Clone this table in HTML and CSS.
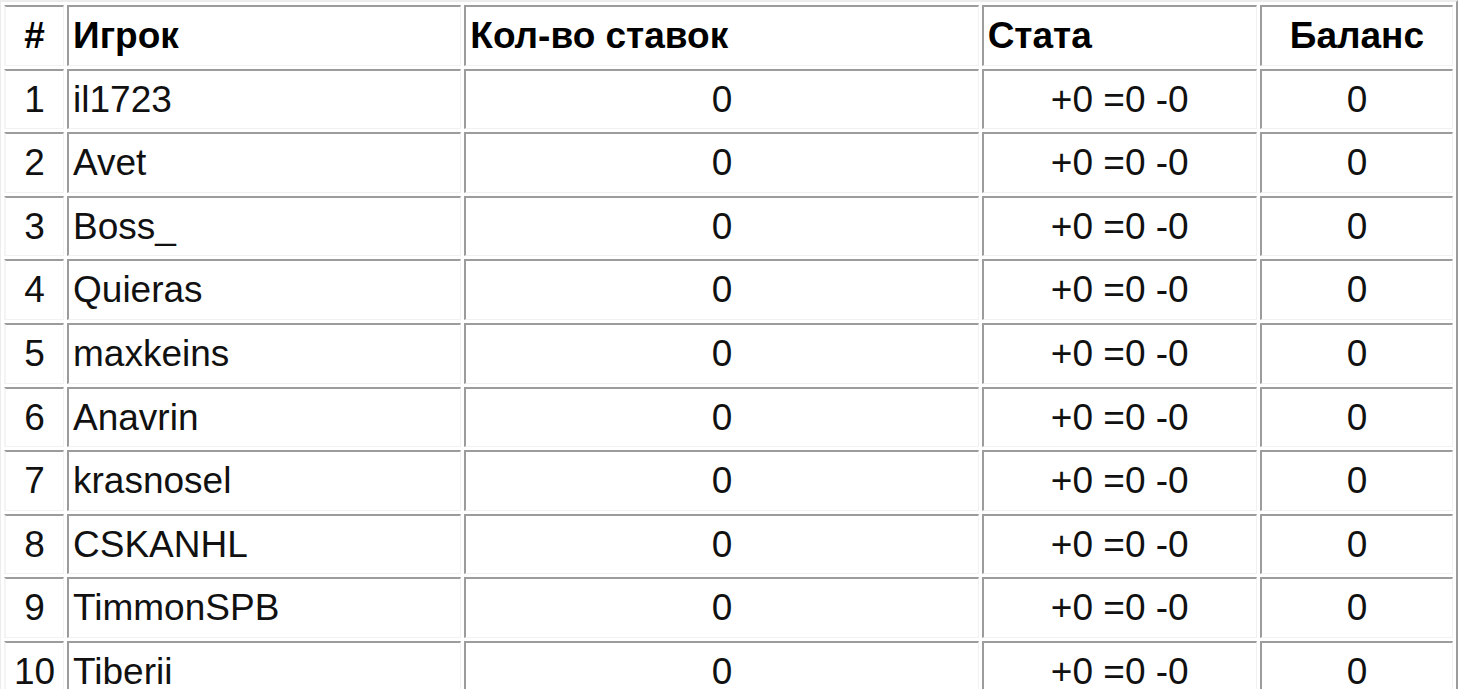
FILE: index.html
```html
<!DOCTYPE html>
<html lang="ru">
<head>
<meta charset="utf-8">
<title>Игроки</title>
<link rel="stylesheet" href="styles.css">
</head>
<body>
<table class="players">
  <colgroup>
    <col class="c-num">
    <col class="c-name">
    <col class="c-bets">
    <col class="c-stat">
    <col class="c-bal">
  </colgroup>
  <thead>
    <tr>
      <th class="center">#</th>
      <th class="left">Игрок</th>
      <th class="left">Кол-во ставок</th>
      <th class="left">Стата</th>
      <th class="center">Баланс</th>
    </tr>
  </thead>
  <tbody>
    <tr><td class="center">1</td><td class="left">il1723</td><td class="center">0</td><td class="center">+0 =0 -0</td><td class="center">0</td></tr>
    <tr><td class="center">2</td><td class="left">Avet</td><td class="center">0</td><td class="center">+0 =0 -0</td><td class="center">0</td></tr>
    <tr><td class="center">3</td><td class="left">Boss_</td><td class="center">0</td><td class="center">+0 =0 -0</td><td class="center">0</td></tr>
    <tr><td class="center">4</td><td class="left">Quieras</td><td class="center">0</td><td class="center">+0 =0 -0</td><td class="center">0</td></tr>
    <tr><td class="center">5</td><td class="left">maxkeins</td><td class="center">0</td><td class="center">+0 =0 -0</td><td class="center">0</td></tr>
    <tr><td class="center">6</td><td class="left">Anavrin</td><td class="center">0</td><td class="center">+0 =0 -0</td><td class="center">0</td></tr>
    <tr><td class="center">7</td><td class="left">krasnosel</td><td class="center">0</td><td class="center">+0 =0 -0</td><td class="center">0</td></tr>
    <tr><td class="center">8</td><td class="left">CSKANHL</td><td class="center">0</td><td class="center">+0 =0 -0</td><td class="center">0</td></tr>
    <tr><td class="center">9</td><td class="left">TimmonSPB</td><td class="center">0</td><td class="center">+0 =0 -0</td><td class="center">0</td></tr>
    <tr><td class="center">10</td><td class="left">Tiberii</td><td class="center">0</td><td class="center">+0 =0 -0</td><td class="center">0</td></tr>
  </tbody>
</table>
</body>
</html>
```
FILE: styles.css
```css
html, body {
  margin: 0;
  padding: 0;
  background: #ffffff;
}

body {
  font-family: "Liberation Sans", Arial, sans-serif;
  color: #111;
  overflow: hidden;
}

.players {
  table-layout: fixed;
  width: 1459px;
  margin-left: -1px;
  border-collapse: separate;
  border-spacing: 3px;
  border-style: solid;
  border-width: 2px;
  border-color: #ececec #9c9c9c #9c9c9c #ececec;
  font-size: 37px;
}

.c-num { width: 60px; }
.c-name { width: 394px; }
.c-bets { width: 514px; }
.c-stat { width: 275px; }
.c-bal { width: 193px; }

.players th,
.players td {
  box-sizing: border-box;
  padding: 0 4px;
  border-style: solid;
  border-width: 2px 1px 1px 2px;
  border-color: #9c9c9c #f2f2f2 #f2f2f2 #9c9c9c;
  line-height: 57.6px;
  white-space: nowrap;
  overflow: hidden;
}

.players th:first-child,
.players td:first-child {
  border-left-color: #f4f4f4;
}

.players th {
  font-weight: bold;
  color: #000;
}

.players td {
  font-weight: normal;
}

.center { text-align: center; }
.left { text-align: left; }
```
